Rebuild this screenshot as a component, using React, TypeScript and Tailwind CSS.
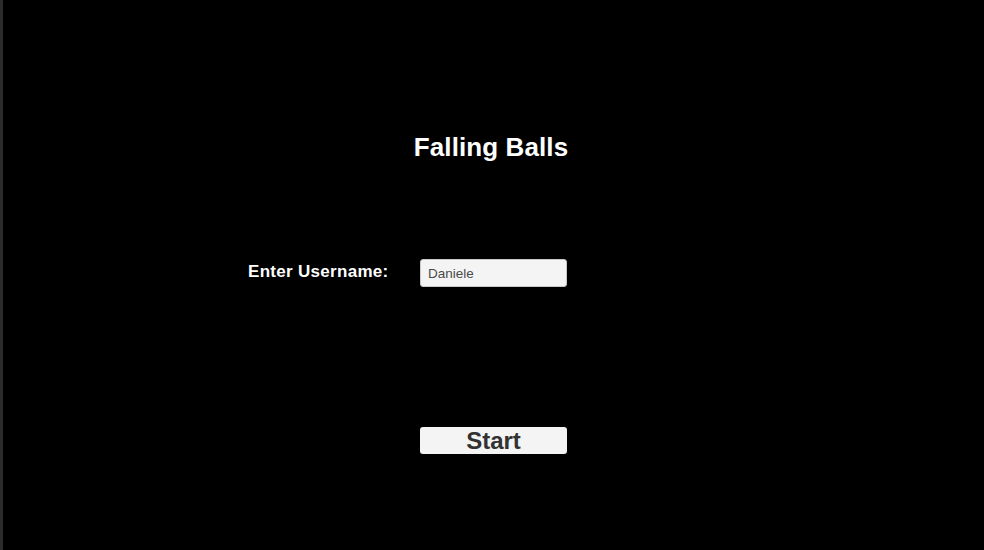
import { useState } from 'react'

export default function App() {
  const [username, setUsername] = useState('Daniele')

  return (
    <div
      className="flex h-[550px] w-full flex-col border-l-[3px] border-[#2c2c2c] bg-black"
      style={{ fontFamily: '"Liberation Sans", Arial, sans-serif' }}
    >
      <div className="pl-[408px] pt-[132px]">
        <h1 className="w-[160px] text-center text-[26px] font-bold leading-[30px] tracking-[0.1px] text-white">
          Falling Balls
        </h1>
      </div>

      <div className="mt-[97px] flex items-center pl-[245px]">
        <label htmlFor="username" className="-mt-[2px] w-[172px] text-[17px] font-bold tracking-[0.3px] text-white">
          Enter Username:
        </label>
        <input
          id="username"
          autoFocus
          value={username}
          onChange={(e) => setUsername(e.target.value)}
          className="h-[28px] w-[147px] rounded-[3px] border border-[#c8c8c8] bg-[#f4f4f4] px-[7px] pt-[1px] text-[13.5px] text-[#4a4a4a] caret-[#555] outline-none"
        />
      </div>

      <div className="mt-[140px] pl-[417px]">
        <button className="flex h-[27px] w-[147px] items-center justify-center rounded-[3px] bg-[#f4f4f4] text-[24px] font-bold leading-none text-[#323232]">
          Start
        </button>
      </div>
    </div>
  )
}
